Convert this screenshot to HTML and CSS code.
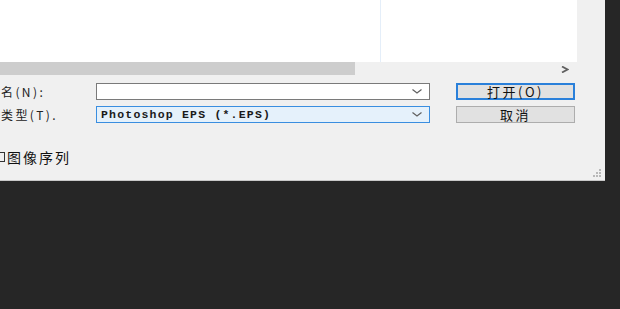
FILE: index.html
```html
<!DOCTYPE html>
<html lang="zh-CN">
<head>
  <meta charset="UTF-8">
  <title>打开</title>
  <link rel="stylesheet" href="styles.css">
</head>
<body>
  <div class="dialog">
    <div class="file-view">
      <div class="file-list">
        <div class="col-divider"></div>
      </div>
    </div>
    <div class="hscroll">
      <div class="hscroll-thumb"></div>
      <span class="hscroll-arrow">
        <svg width="8" height="7" viewBox="0 0 8 7"><path d="M1 0.5 L6.5 3.5 L1 6.5" fill="none" stroke="#606060" stroke-width="1.8"/></svg>
      </span>
    </div>

    <div class="form-grid">
      <label class="field-label">名(N):</label>
      <div class="combo">
        <span class="combo-text"></span>
        <svg class="chevron" width="10" height="5" viewBox="0 0 10 5"><path d="M0.5 0.5 L5 4 L9.5 0.5" fill="none" stroke="#606060" stroke-width="1.2"/></svg>
      </div>
      <button class="btn btn-primary">打开(O)</button>

      <label class="field-label">类型(T).</label>
      <div class="combo combo-active">
        <span class="combo-text">Photoshop EPS (*.EPS)</span>
        <svg class="chevron" width="10" height="5" viewBox="0 0 10 5"><path d="M0.5 0.5 L5 4 L9.5 0.5" fill="none" stroke="#606060" stroke-width="1.2"/></svg>
      </div>
      <button class="btn">取消</button>
    </div>

    <div class="option-row">
      <span class="checkbox"></span>
      <span class="option-text">图像序列</span>
    </div>

    <svg class="grip" width="10" height="10" viewBox="0 0 10 10">
      <rect x="7" y="1" width="2" height="2" fill="#b8b8b8"/>
      <rect x="4" y="4" width="2" height="2" fill="#b8b8b8"/>
      <rect x="7" y="4" width="2" height="2" fill="#b8b8b8"/>
      <rect x="1" y="7" width="2" height="2" fill="#b8b8b8"/>
      <rect x="4" y="7" width="2" height="2" fill="#b8b8b8"/>
      <rect x="7" y="7" width="2" height="2" fill="#b8b8b8"/>
    </svg>
  </div>
</body>
</html>
```

FILE: styles.css
```css
body {
  margin: 0;
  padding: 0;
  background-color: #262626;
  font-family: "Noto Sans CJK SC", "Liberation Sans", sans-serif;
  color: #1a1a1a;
}

.dialog {
  position: relative;
  width: 605px;
  height: 181px;
  background-color: #f0f0f0;
  border-bottom: 1px solid #c8c8c8;
  box-sizing: border-box;
}

.file-view {
  height: 62px;
}

.file-list {
  width: 577px;
  height: 62px;
  background-color: #ffffff;
  display: flex;
}

.col-divider {
  margin-left: 380px;
  width: 1px;
  height: 100%;
  background-color: #e4eef9;
}

.hscroll {
  width: 577px;
  height: 13px;
  display: flex;
  align-items: center;
  justify-content: space-between;
}

.hscroll-thumb {
  width: 355px;
  height: 13px;
  background-color: #cdcdcd;
}

.hscroll-arrow {
  display: flex;
  margin-right: 8px;
  margin-top: 1px;
}

.form-grid {
  display: grid;
  grid-template-columns: 96px 334px 145px;
  row-gap: 6px;
  margin-top: 8px;
}

.field-label {
  font-size: 12px;
  line-height: 17px;
  padding-left: 1px;
  color: #222;
  letter-spacing: 2.4px;
}

.combo {
  height: 17px;
  box-sizing: border-box;
  border: 1px solid #7a7a7a;
  background-color: #ffffff;
  display: flex;
  align-items: center;
  justify-content: space-between;
  padding: 0 7px 0 4px;
}

.combo-active {
  border-color: #3a8ee0;
  background-color: #e5f1fb;
}

.combo-text {
  font-family: "Liberation Mono", monospace;
  font-weight: bold;
  font-size: 11.5px;
  letter-spacing: 1.2px;
  color: #1a1a1a;
}

.chevron {
  display: block;
}

.btn {
  height: 17px;
  margin-left: 26px;
  box-sizing: border-box;
  border: 1px solid #adadad;
  background-color: #e1e1e1;
  font-family: "Noto Sans CJK SC", sans-serif;
  font-size: 13px;
  line-height: 13px;
  padding: 0;
  color: #111;
  letter-spacing: 2.5px;
}

.btn-primary {
  border: 2px solid #2a80da;
}

.option-row {
  display: flex;
  align-items: center;
  gap: 2px;
  margin-top: 27px;
}

.checkbox {
  width: 5px;
  height: 10px;
  border: 1px solid #333;
  border-left: none;
  box-sizing: border-box;
}

.option-text {
  font-size: 14px;
  line-height: 14px;
  letter-spacing: 2px;
  color: #111;
}

.grip {
  position: absolute;
  right: 3px;
  bottom: 2px;
}
```
